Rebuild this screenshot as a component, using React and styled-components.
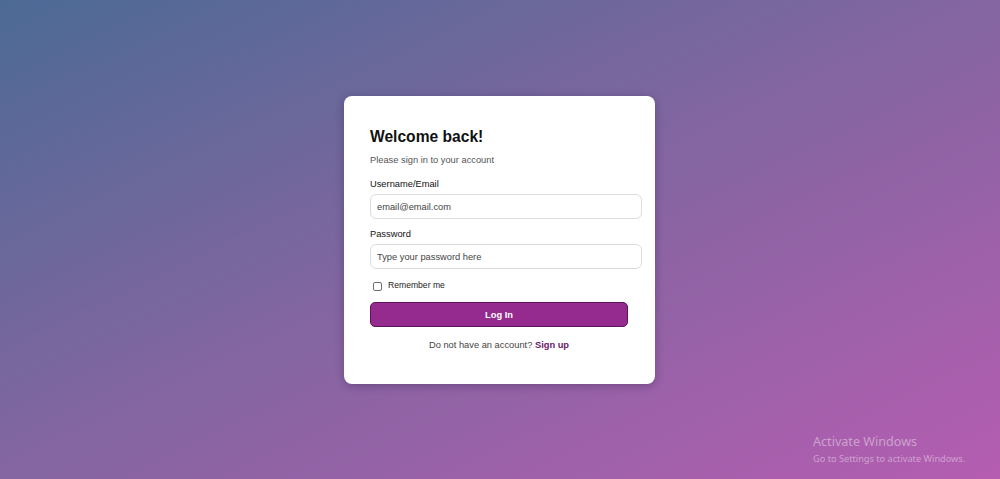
import styled, { createGlobalStyle } from "styled-components";

const GlobalStyle = createGlobalStyle`
  html, body {
    margin: 0;
    padding: 0;
  }
  body {
    font-family: "Liberation Sans", Arial, sans-serif;
  }
  * {
    box-sizing: border-box;
  }
`

const Page = styled.div`
  position: relative;
  min-height: 100vh;
  display: flex;
  align-items: center;
  justify-content: center;
  background: linear-gradient(to bottom right, #4c6a95 0%, #7f66a0 45%, #b55db1 100%);
  overflow: hidden;
`

const Card = styled.div`
  width: 311px;
  height: 288px;
  margin: 1px 0 0 -1px;
  background: #fff;
  border-radius: 8px;
  box-shadow: 0 2px 10px rgba(20, 10, 40, 0.28);
  padding: 32px 26px 0 26px;
`

const Title = styled.h2`
  margin: 0;
  font-size: 15.6px;
  line-height: 18px;
  font-weight: 700;
  color: #111;
`

const Subtitle = styled.p`
  margin: 8.5px 0 0;
  font-size: 9.3px;
  line-height: 11px;
  color: #555;
`

const Label = styled.label`
  display: block;
  margin-top: ${p => p.$gap}px;
  font-size: 9.3px;
  line-height: 11px;
  color: #111;
`

const Input = styled.input`
  display: block;
  width: 272px;
  height: 25px;
  margin-top: 4.5px;
  padding: 0 6px;
  border: 1px solid #dcdcdc;
  border-radius: 6px;
  font-family: inherit;
  font-size: 9.3px;
  color: #333;
  background: #fff;
  outline: none;
  &::placeholder {
    color: #444;
  }
`

const CheckRow = styled.label`
  display: flex;
  align-items: center;
  gap: 6px;
  margin-top: 10.5px;
  height: 11px;
  padding-left: 3px;
  font-size: 8.6px;
  color: #222;
`

const Box = styled.input`
  appearance: none;
  width: 9px;
  height: 9px;
  margin: 2px 0 0 0;
  border: 1px solid #6f6f6f;
  border-radius: 2px;
  background: #fff;
`

const Button = styled.button`
  display: block;
  width: 258px;
  height: 25px;
  margin-top: 11.5px;
  border: 1px solid #5e135a;
  border-radius: 5px;
  background: #952a8f;
  color: #fff;
  font-family: inherit;
  font-size: 9.3px;
  font-weight: 700;
  cursor: pointer;
`

const Footer = styled.p`
  width: 258px;
  margin: 12.5px 0 0;
  text-align: center;
  font-size: 9.3px;
  line-height: 11px;
  color: #444;
`

const SignUp = styled.a`
  color: #6a1a68;
  font-weight: 700;
  text-decoration: none;
`

const Watermark = styled.div`
  position: absolute;
  left: 813px;
  top: 434px;
  font-family: "Noto Sans", "Open Sans", sans-serif;
  color: rgba(255, 255, 255, 0.42);
`

const WmTitle = styled.div`
  font-size: 12.6px;
  line-height: 16px;
`

const WmSub = styled.div`
  font-size: 9.2px;
  line-height: 13px;
  margin-top: 2px;
`

export default function App() {
  return (
    <>
      <GlobalStyle />
      <Page>
        <Card>
          <Title>Welcome back!</Title>
          <Subtitle>Please sign in to your account</Subtitle>
          <Label $gap={13}>Username/Email</Label>
          <Input type="text" placeholder="email@email.com" />
          <Label $gap={9.5}>Password</Label>
          <Input type="password" placeholder="Type your password here" />
          <CheckRow>
            <Box type="checkbox" />
            Remember me
          </CheckRow>
          <Button>Log In</Button>
          <Footer>
            Do not have an account? <SignUp href="#">Sign up</SignUp>
          </Footer>
        </Card>
        <Watermark>
          <WmTitle>Activate Windows</WmTitle>
          <WmSub>Go to Settings to activate Windows.</WmSub>
        </Watermark>
      </Page>
    </>
  )
}
